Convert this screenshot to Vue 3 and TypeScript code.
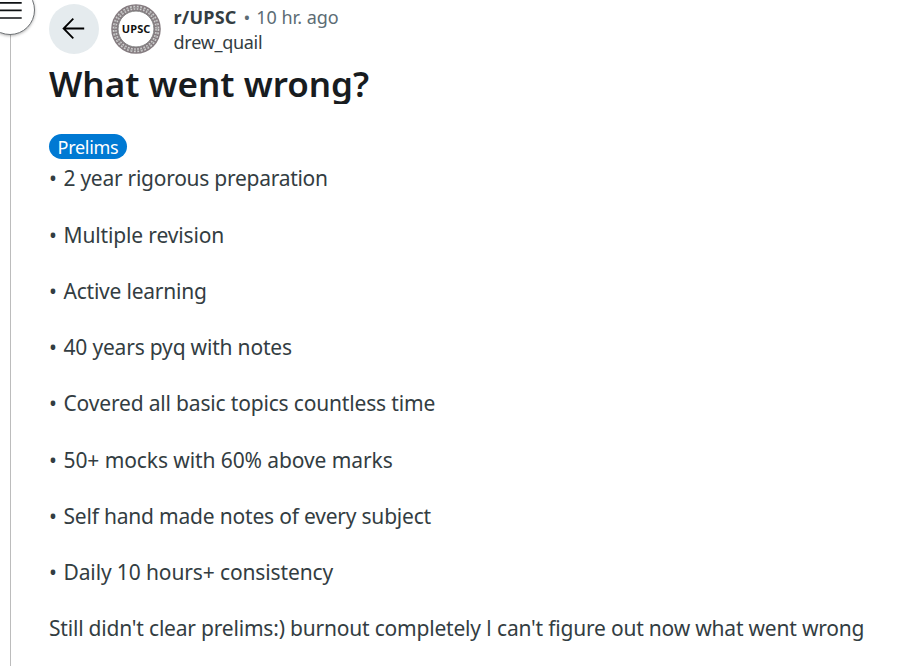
<script setup lang="ts">
interface Point {
  text: string
  tracking: number
}

const points: Point[] = [
  { text: '2 year rigorous preparation', tracking: -0.27 },
  { text: 'Multiple revision', tracking: -0.14 },
  { text: 'Active learning', tracking: -0.22 },
  { text: '40 years pyq with notes', tracking: -0.19 },
  { text: 'Covered all basic topics countless time', tracking: -0.17 },
  { text: '50+ mocks with 60% above marks', tracking: -0.09 },
  { text: 'Self hand made notes of every subject', tracking: -0.2 },
  { text: 'Daily 10 hours+ consistency', tracking: -0.125 },
]
</script>

<template>
  <div class="page">
    <aside class="rail">
      <button class="menu" aria-label="Menu">
        <svg width="50" height="50" viewBox="0 0 50 50">
          <path d="M13 17.8h23.7M13 25.4h23.7M13 33h23.7" fill="none" stroke="#0e1113" stroke-width="1.7" />
        </svg>
      </button>
    </aside>

    <main class="post">
      <header class="head">
        <button class="back" aria-label="Back">
          <svg width="50" height="50" viewBox="0 0 50 50">
            <path d="M35.2 24.5H14.6M24.3 14.6L14.6 24.5l9.7 9.9" fill="none" stroke="#000" stroke-width="1.8" />
          </svg>
        </button>
        <svg class="avatar" width="50" height="50" viewBox="0 0 50 50">
          <circle cx="25" cy="25" r="24.8" fill="#857c80" />
          <circle cx="25" cy="25" r="21.3" fill="none" stroke="#cfcfcf" stroke-width="4" stroke-dasharray="1.8 1.55" />
          <circle cx="25" cy="25" r="21.3" fill="none" stroke="#999" stroke-width="1.3" stroke-dasharray="2 1.35" />
          <circle cx="25" cy="25" r="18" fill="#fff" stroke="#808080" stroke-width="1" />
          <text class="seal" x="25.2" y="29" text-anchor="middle">UPSC</text>
        </svg>
        <div class="meta">
          <div class="line">
            <span class="sub">r/UPSC</span>
            <span class="dot">•</span>
            <span class="time">10 hr. ago</span>
          </div>
          <div class="line author">drew_quail</div>
        </div>
      </header>

      <h1 class="title">What went wrong?</h1>
      <span class="flair">Prelims</span>

      <div class="body">
        <p v-for="point in points" :key="point.text" class="para">
          <span class="bullet">•</span>
          <span :style="{ letterSpacing: point.tracking + 'px' }">{{ point.text }}</span>
        </p>
        <p class="para closing">Still didn't clear prelims:) burnout completely <span class="pronoun">I</span> can't figure out now what went wrong</p>
      </div>
    </main>
  </div>
</template>

<style>
body {
  background: #fff;
  overflow: hidden;
}
</style>

<style scoped>
.page {
  display: flex;
  height: 666px;
  overflow: hidden;
  font-family: "Noto Sans", "Open Sans", sans-serif;
  color: #333d42;
}
.rail {
  position: relative;
  box-sizing: border-box;
  flex: none;
  width: 11px;
  border-right: 1px solid #bcbcbc;
}
.menu {
  position: absolute;
  left: -15px;
  top: -15px;
  box-sizing: border-box;
  width: 50px;
  height: 50px;
  padding: 0;
  border: 1px solid #6f7376;
  border-radius: 50%;
  background: #fff;
  box-shadow: 0 1px 3px rgba(0, 0, 0, 0.3);
}
.menu svg {
  display: block;
  margin: -1px;
}
.post {
  flex: 1;
  padding: 4px 0 0 38px;
}
.head {
  display: flex;
  height: 56px;
}
.back {
  width: 50px;
  height: 50px;
  padding: 0;
  border: 0;
  border-radius: 50%;
  background: #e5ebee;
}
.back svg {
  display: block;
}
.avatar {
  margin-left: 12px;
}
.seal {
  font: 700 11px "Noto Sans", sans-serif;
  letter-spacing: 0.1px;
  fill: #111;
}
.meta {
  padding: 1px 0 0 12.6px;
  font-size: 18px;
}
.line {
  display: flex;
  height: 25px;
  line-height: 25px;
  white-space: nowrap;
}
.sub {
  width: 69.8px;
  font-weight: 700;
  letter-spacing: 0.2px;
}
.dot {
  width: 12.8px;
  color: #5c6c74;
}
.time {
  color: #5c6c74;
}
.author {
  letter-spacing: -0.3px;
}
.title {
  height: 44px;
  margin: 0;
  overflow: hidden;
  font-size: 35px;
  font-weight: 600;
  line-height: 47px;
  color: #181c1f;
}
.flair {
  display: block;
  box-sizing: border-box;
  width: 78px;
  height: 25px;
  margin-top: 30px;
  border-radius: 13px;
  background: #0079d3;
  color: #fff;
  font-size: 18px;
  line-height: 26px;
  letter-spacing: -0.3px;
  text-align: center;
}
.body {
  display: grid;
  gap: 28.25px;
  padding-top: 5.3px;
  font-size: 21px;
  line-height: 28px;
}
.para {
  display: flex;
  height: 28px;
  margin: 0;
  white-space: nowrap;
}
.bullet {
  width: 14.5px;
}
.closing {
  display: block;
  letter-spacing: -0.2px;
}
.pronoun {
  font-family: "Open Sans", sans-serif;
  line-height: 1;
}
</style>
